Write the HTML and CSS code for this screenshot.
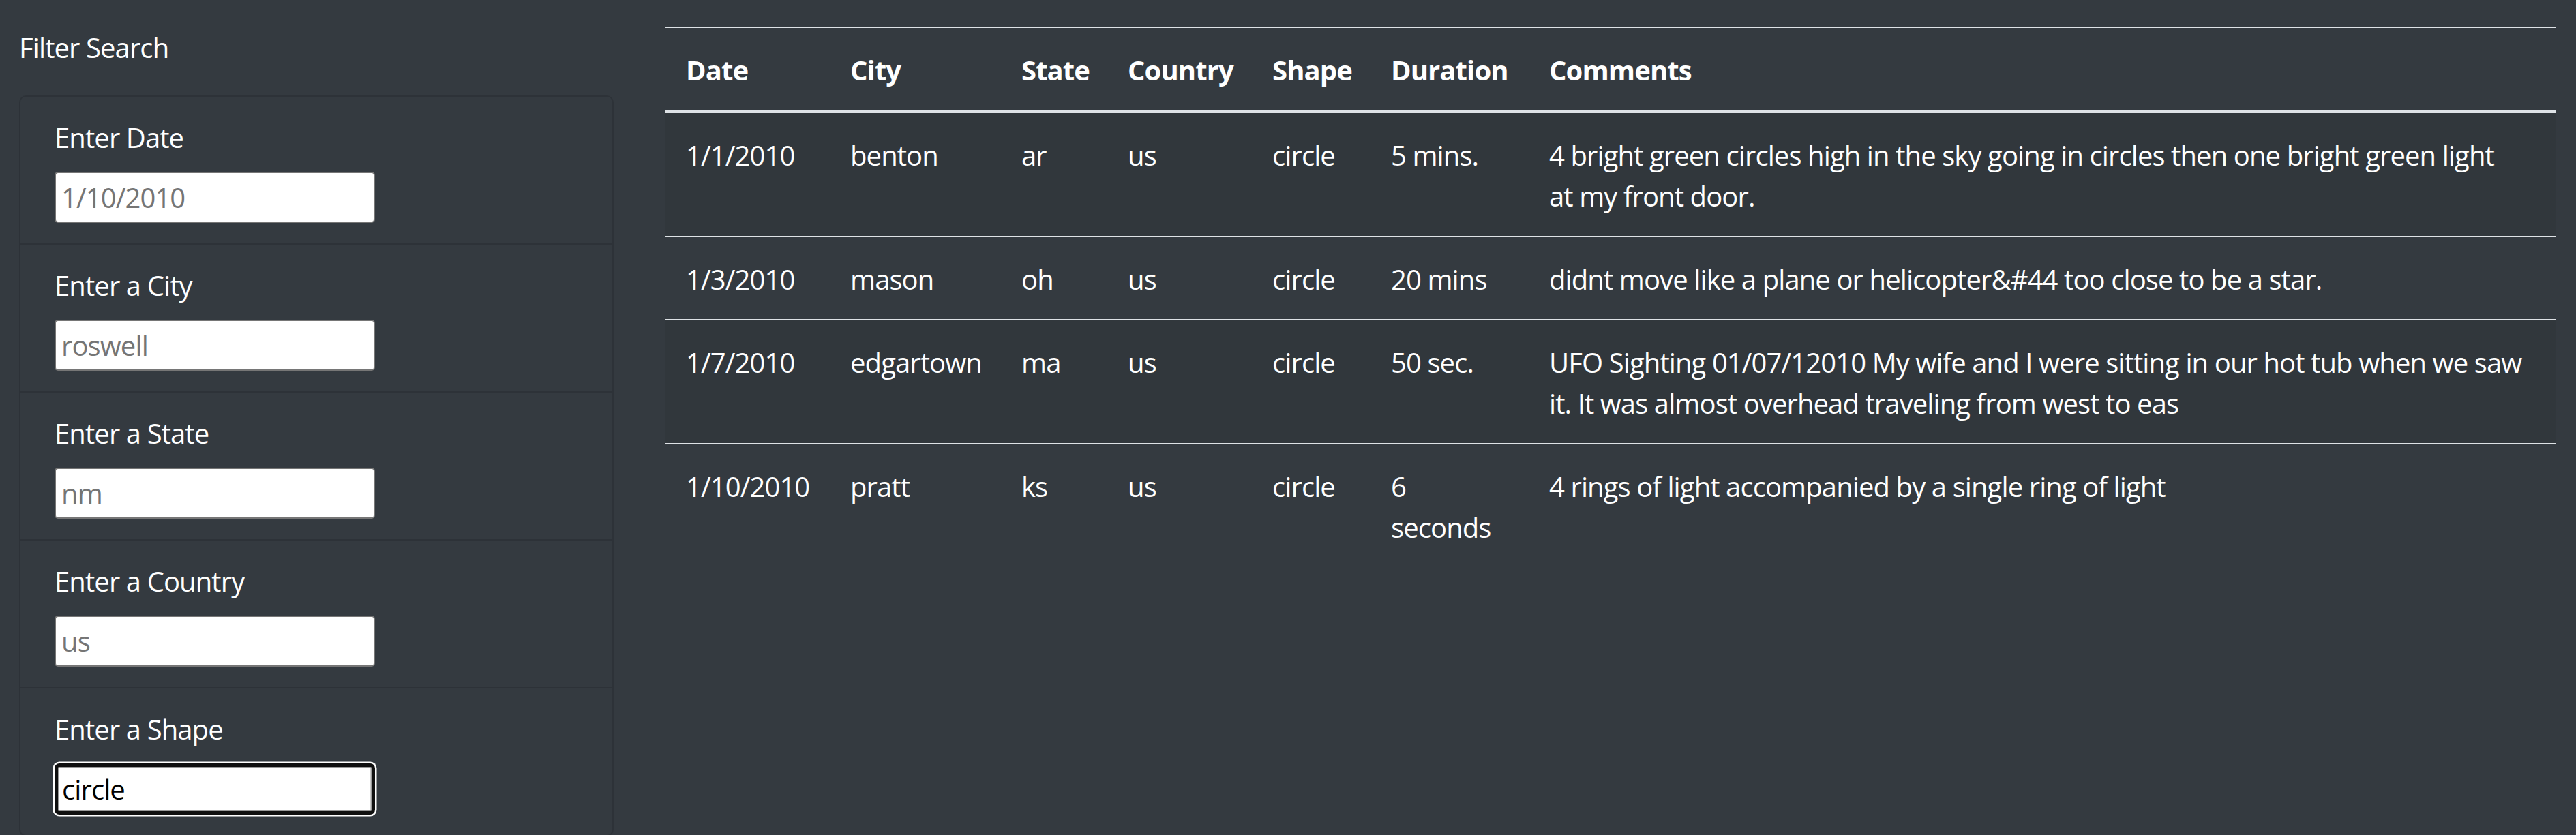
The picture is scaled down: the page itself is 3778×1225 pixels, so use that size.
FILE: index.html
```html
<!DOCTYPE html>
<html lang="en">
<head>
<meta charset="utf-8">
<title>UFO Sightings</title>
<link rel="stylesheet" href="styles.css">
</head>
<body>
<div class="page">
  <aside class="sidebar">
    <div class="sidebar-title">Filter Search</div>
    <div class="card">
      <ul class="filters">
        <li class="filter">
          <label class="filter-label" for="datetime">Enter Date</label>
          <input class="filter-input" id="datetime" type="text" placeholder="1/10/2010">
        </li>
        <li class="filter">
          <label class="filter-label" for="city">Enter a City</label>
          <input class="filter-input" id="city" type="text" placeholder="roswell">
        </li>
        <li class="filter">
          <label class="filter-label" for="state">Enter a State</label>
          <input class="filter-input" id="state" type="text" placeholder="nm">
        </li>
        <li class="filter">
          <label class="filter-label" for="country">Enter a Country</label>
          <input class="filter-input" id="country" type="text" placeholder="us">
        </li>
        <li class="filter">
          <label class="filter-label" for="shape">Enter a Shape</label>
          <input class="filter-input is-focused" id="shape" type="text" value="circle">
        </li>
      </ul>
    </div>
  </aside>
  <main class="main">
    <table class="ufo-table">
      <colgroup>
        <col class="col-date">
        <col class="col-city">
        <col class="col-state">
        <col class="col-country">
        <col class="col-shape">
        <col class="col-duration">
        <col class="col-comments">
      </colgroup>
      <thead>
        <tr>
          <th>Date</th>
          <th>City</th>
          <th>State</th>
          <th>Country</th>
          <th>Shape</th>
          <th>Duration</th>
          <th>Comments</th>
        </tr>
      </thead>
      <tbody>
        <tr>
          <td>1/1/2010</td>
          <td>benton</td>
          <td>ar</td>
          <td>us</td>
          <td>circle</td>
          <td>5 mins.</td>
          <td>4 bright green circles high in the sky going in circles then one bright green light<br>at my front door.</td>
        </tr>
        <tr>
          <td>1/3/2010</td>
          <td>mason</td>
          <td>oh</td>
          <td>us</td>
          <td>circle</td>
          <td>20 mins</td>
          <td>didnt move like a plane or helicopter&amp;#44 too close to be a star.</td>
        </tr>
        <tr>
          <td>1/7/2010</td>
          <td>edgartown</td>
          <td>ma</td>
          <td>us</td>
          <td>circle</td>
          <td>50 sec.</td>
          <td>UFO Sighting 01/07/12010 My wife and I were sitting in our hot tub when we saw it. It was almost overhead traveling from west to eas</td>
        </tr>
        <tr>
          <td>1/10/2010</td>
          <td>pratt</td>
          <td>ks</td>
          <td>us</td>
          <td>circle</td>
          <td>6 seconds</td>
          <td>4 rings of light accompanied by a single ring of light</td>
        </tr>
      </tbody>
    </table>
  </main>
</div>
</body>
</html>
```

FILE: styles.css
```css
html, body {
  margin: 0;
  padding: 0;
  overflow: hidden;
}

body {
  background: #343a40;
  color: #fff;
  font-family: "Open Sans", "Noto Sans", "DejaVu Sans", sans-serif;
  font-size: 40px;
  line-height: 60px;
  letter-spacing: -0.9px;
}

.page {
  display: flex;
  gap: 76px;
  padding: 39px 29px 0 28px;
  align-items: flex-start;
}

.sidebar {
  flex: none;
  width: 872px;
}

.sidebar-title {
  line-height: 60px;
  padding-top: 1px;
  margin-bottom: 40px;
}

.card {
  border: 2.5px solid rgba(0, 0, 0, 0.125);
  border-radius: 10px;
}

.filters {
  list-style: none;
  margin: 0;
  padding: 0;
}

.filter {
  padding: 30px 50px;
  border-bottom: 2.5px solid rgba(0, 0, 0, 0.125);
}

.filter:last-child {
  border-bottom: none;
}

.filter-label {
  display: block;
  line-height: 60px;
  margin-bottom: 20px;
}

.filter-input {
  display: block;
  box-sizing: border-box;
  width: 470px;
  height: 75px;
  margin: 0;
  padding: 0 8px;
  border: 2.5px solid #767676;
  border-radius: 5px;
  background: #fff;
  color: #000;
  font-family: inherit;
  font-size: 40px;
  letter-spacing: -0.9px;
  outline: none;
}

.filter-input::placeholder {
  color: #757575;
  opacity: 1;
}

.filter-input.is-focused {
  border: 5px solid #101010;
  border-radius: 7px;
  padding-left: 6px;
  box-shadow: 0 0 0 2.5px #fff, inset 0 0 0 1.5px #9a9a9a;
}

.main {
  flex: 1;
  min-width: 0;
}

.ufo-table {
  width: 100%;
  table-layout: fixed;
  border-collapse: collapse;
  color: #fff;
}

.col-date { width: 241px; }
.col-city { width: 251px; }
.col-state { width: 156px; }
.col-country { width: 212px; }
.col-shape { width: 174px; }
.col-duration { width: 232px; }
.col-comments { width: auto; }

.ufo-table th,
.ufo-table td {
  padding: 32px 30px 28px;
  text-align: left;
  vertical-align: top;
  line-height: 60px;
  border-top: 2.5px solid #dee2e6;
}

.ufo-table th {
  font-weight: 700;
  border-bottom: 5px solid #dee2e6;
}

.ufo-table tbody tr:nth-child(odd) {
  background: rgba(0, 0, 0, 0.05);
}

.ufo-table tbody tr:first-child td {
  border-top: none;
}
```
